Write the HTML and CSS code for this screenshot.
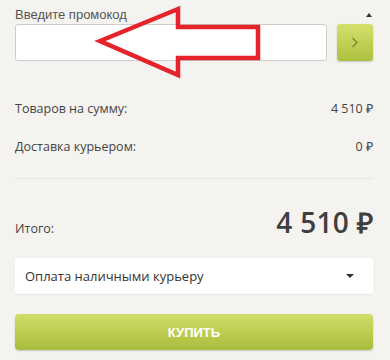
FILE: index.html
```html
<!DOCTYPE html>
<html lang="ru">
<head>
<meta charset="utf-8">
<link rel="stylesheet" href="styles.css">
</head>
<body>
<div class="page">
  <div class="promo-head">
    <span class="promo-label">Введите промокод</span>
    <span class="tri-up"></span>
  </div>
  <div class="promo-row">
    <div class="promo-input"></div>
    <div class="promo-btn">
      <svg width="8" height="11" viewBox="0 0 8 11"><polyline points="1.5,1 6,5.5 1.5,10" fill="none" stroke="#6f7c3c" stroke-width="1.1"/></svg>
    </div>
  </div>

  <div class="summary">
    <div class="row"><span>Товаров на сумму:</span><span>4 510 ₽</span></div>
    <div class="row"><span>Доставка курьером:</span><span>0 ₽</span></div>
  </div>
  <div class="divider"></div>
  <div class="total">
    <span class="total-label">Итого:</span>
    <span class="total-value">4 510 ₽</span>
  </div>
  <div class="select">
    <span>Оплата наличными курьеру</span>
    <span class="tri-down"></span>
  </div>
  <div class="buy">КУПИТЬ</div>

  <svg class="arrow" width="390" height="90" viewBox="0 0 390 90">
    <polygon points="100,41 178,9 178,27 258,27 258,58 178,58 178,75" fill="none" stroke="#e4232a" stroke-width="4.5" stroke-linejoin="miter"/>
  </svg>
</div>
</body>
</html>
```
FILE: styles.css
```css
html, body {
  margin: 0;
  padding: 0;
  background: #f5f3f0;
}
.page {
  position: relative;
  width: 390px;
  height: 360px;
  box-sizing: border-box;
  padding: 5px 17px 0 15px;
  font-family: "Open Sans", "Liberation Sans", sans-serif;
  color: #444;
}
.promo-head {
  display: flex;
  justify-content: space-between;
  align-items: center;
  height: 19px;
}
.promo-label {
  font-family: "Liberation Sans", Arial, sans-serif;
  font-size: 13px;
  color: #555;
}
.tri-up {
  width: 0;
  height: 0;
  border-left: 3.5px solid transparent;
  border-right: 3.5px solid transparent;
  border-bottom: 4px solid #333;
  margin-right: 1px;
}
.promo-row {
  display: flex;
  gap: 10px;
}
.promo-input {
  flex: 1;
  height: 35px;
  background: #fff;
  border: 1px solid #cfcdca;
  border-radius: 3px;
}
.promo-btn {
  width: 36px;
  height: 37px;
  border-radius: 3px;
  background: linear-gradient(#d4e06b, #adc03e);
  box-shadow: 0 1px 2px rgba(0,0,0,0.18);
  display: flex;
  align-items: center;
  justify-content: center;
}
.summary {
  margin-top: 28px;
}
.row {
  display: flex;
  justify-content: space-between;
  align-items: center;
  height: 38px;
  font-size: 12.5px;
}
.divider {
  margin-top: 13px;
  height: 1px;
  background: #e7e5e1;
}
.total {
  margin-top: 24px;
  display: flex;
  justify-content: space-between;
  align-items: baseline;
  height: 40px;
}
.total-label {
  font-size: 12.5px;
}
.total-value {
  font-size: 28px;
  font-weight: 600;
  color: #3f3f3f;
  letter-spacing: 0.3px;
}
.select {
  margin-top: 15px;
  height: 36px;
  background: #fff;
  border-radius: 3px;
  box-shadow: 0 1px 1px rgba(0,0,0,0.05);
  display: flex;
  justify-content: space-between;
  align-items: center;
  padding: 0 19px 0 10px;
  font-size: 13px;
  color: #333;
}
.tri-down {
  width: 0;
  height: 0;
  border-left: 4px solid transparent;
  border-right: 4px solid transparent;
  border-top: 4px solid #333;
}
.buy {
  margin-top: 20px;
  height: 36px;
  border-radius: 4px;
  background: linear-gradient(#d1de68, #a9bc3c);
  box-shadow: 0 1px 2px rgba(0,0,0,0.18);
  display: flex;
  align-items: center;
  justify-content: center;
  color: #fff;
  font-family: "Liberation Sans", Arial, sans-serif;
  font-weight: bold;
  font-size: 13px;
}
.arrow {
  position: absolute;
  left: 0;
  top: 0;
  pointer-events: none;
}
```
